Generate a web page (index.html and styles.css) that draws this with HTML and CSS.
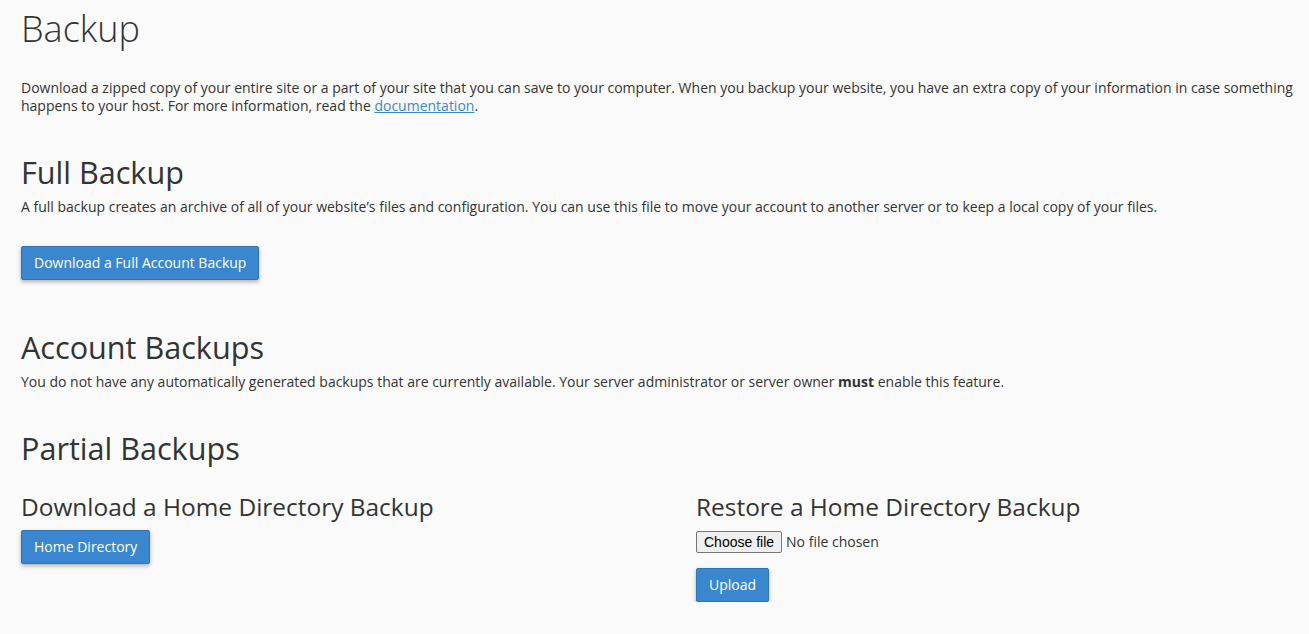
FILE: index.html
```html
<!DOCTYPE html>
<html lang="en">
<head>
<meta charset="utf-8">
<title>Backup</title>
<link rel="stylesheet" href="styles.css">
</head>
<body>
<div class="page">
  <h1 class="page-title">Backup</h1>
  <p class="intro">Download a zipped copy of your entire site or a part of your site that you can save to your computer. When you backup your website, you have an extra copy of your information in case something happens to your host. For more information, read the <a href="#">documentation</a>.</p>

  <section class="section section-full">
    <h2 class="section-title">Full Backup</h2>
    <p class="section-desc">A full backup creates an archive of all of your website’s files and configuration. You can use this file to move your account to another server or to keep a local copy of your files.</p>
    <button class="btn btn-primary btn-full" type="button">Download a Full Account Backup</button>
  </section>

  <section class="section section-account">
    <h2 class="section-title">Account Backups</h2>
    <p class="section-desc">You do not have any automatically generated backups that are currently available. Your server administrator or server owner <strong>must</strong> enable this feature.</p>
  </section>

  <section class="section section-partial">
    <h2 class="section-title">Partial Backups</h2>
    <div class="columns">
      <div class="col">
        <h3 class="col-title">Download a Home Directory Backup</h3>
        <button class="btn btn-primary btn-col" type="button">Home Directory</button>
      </div>
      <div class="col">
        <h3 class="col-title">Restore a Home Directory Backup</h3>
        <label class="file-control">
          <input class="file-input" type="file">
          <span class="file-btn">Choose file</span>
          <span class="file-name">No file chosen</span>
        </label>
        <div class="upload-row">
          <button class="btn btn-primary" type="button">Upload</button>
        </div>
      </div>
    </div>
  </section>
</div>
</body>
</html>
```

FILE: styles.css
```css
html, body {
  margin: 0;
  padding: 0;
  background: #fafafa;
}

body {
  font-family: "Open Sans", "Noto Sans", sans-serif;
  font-size: 14px;
  line-height: 18px;
  color: #333333;
}

.page {
  padding: 0 15px 0 21px;
}

.page-title {
  margin: 8px 0 0;
  font-size: 36px;
  font-weight: 300;
  line-height: 42px;
  color: #333333;
}

.intro {
  margin: 29px 0 0;
}

.intro a {
  color: #3a87cf;
  text-decoration: underline;
}

.section-title {
  margin: 0;
  font-size: 30.6px;
  font-weight: 400;
  line-height: 34px;
  color: #333333;
}

.section-full {
  margin-top: 40px;
}

.section-account {
  margin-top: 50px;
}

.section-partial {
  margin-top: 40px;
}

.section-desc {
  margin: 9px 0 0;
}

.btn {
  display: inline-block;
  font-family: "Open Sans", "Noto Sans", sans-serif;
  font-size: 14px;
  line-height: 20px;
  padding: 6px 12px;
  border: 1px solid #2f74b5;
  border-radius: 2px;
  cursor: pointer;
}

.btn-primary {
  background: #3a87cf;
  color: #ffffff;
  box-shadow: 0 2px 4px rgba(0, 0, 0, 0.3);
}

.btn-full {
  margin-top: 30px;
}

.columns {
  display: grid;
  grid-template-columns: 675px 1fr;
  margin-top: 29px;
}

.col-title {
  margin: 0;
  font-size: 24.45px;
  font-weight: 400;
  line-height: 26px;
  color: #333333;
}

.btn-col {
  margin-top: 10px;
}

.file-control {
  display: flex;
  align-items: center;
  margin-top: 11px;
  cursor: pointer;
}

.file-input {
  display: none;
}

.file-btn {
  font-family: "Liberation Sans", Arial, sans-serif;
  font-size: 14px;
  line-height: 17px;
  color: #000000;
  background: #efefef;
  border: 1px solid #767676;
  border-radius: 2px;
  padding: 2px 7px 1px;
}

.file-name {
  margin-left: 4px;
  font-size: 14px;
  color: #333333;
}

.upload-row {
  margin-top: 15px;
}
```
